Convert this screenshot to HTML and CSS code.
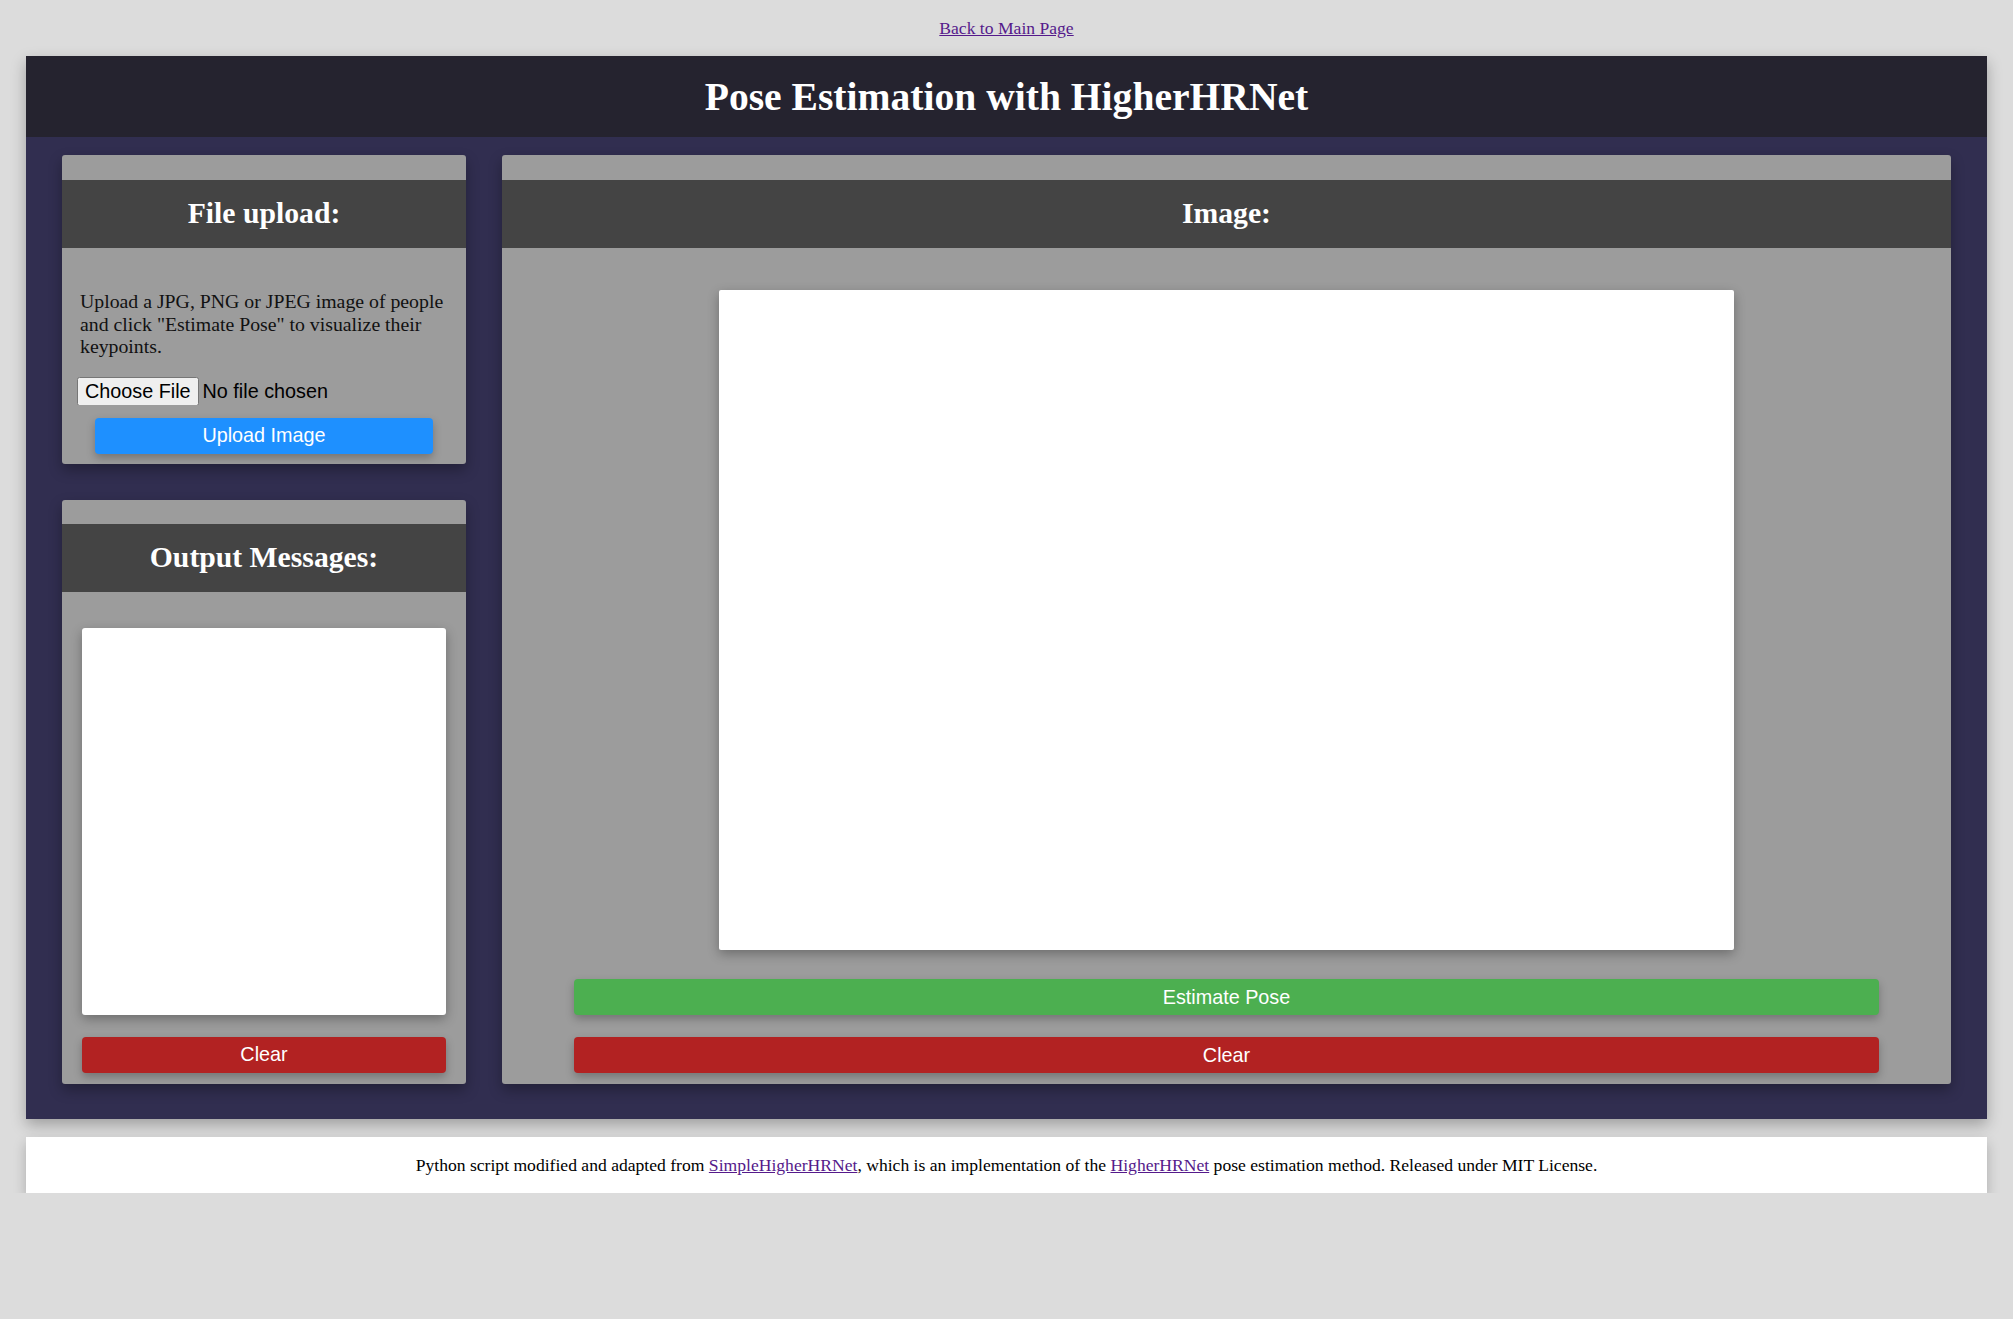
FILE: index.html
```html
<!DOCTYPE html>
<html lang="en">
<head>
<meta charset="utf-8">
<title>Pose Estimation with HigherHRNet</title>
<link rel="stylesheet" href="styles.css">
</head>
<body>
  <p class="back"><a href="#">Back to Main Page</a></p>
  <main class="app">
    <header class="app-header">
      <h1 class="app-title">Pose Estimation with HigherHRNet</h1>
    </header>
    <div class="app-body">
      <div class="left-col">
        <section class="panel">
          <h2 class="panel-title">File upload:</h2>
          <form class="upload-body">
            <p class="upload-text">Upload a JPG, PNG or JPEG image of people and click "Estimate Pose" to visualize their keypoints.</p>
            <input class="file-input" type="file" accept=".jpg,.png,.jpeg">
            <button type="button" class="btn btn-blue btn-upload">Upload Image</button>
          </form>
        </section>
        <section class="panel panel-output">
          <h2 class="panel-title">Output Messages:</h2>
          <div class="output-body">
            <div class="output-box"></div>
            <button type="button" class="btn btn-red btn-full">Clear</button>
          </div>
        </section>
      </div>
      <section class="panel panel-image">
        <h2 class="panel-title">Image:</h2>
        <div class="image-body">
          <div class="image-box"></div>
          <button type="button" class="btn btn-green btn-wide btn-estimate">Estimate Pose</button>
          <button type="button" class="btn btn-red btn-wide btn-clear">Clear</button>
        </div>
      </section>
    </div>
  </main>
  <footer class="footer">
    <p class="footer-text">Python script modified and adapted from <a href="#">SimpleHigherHRNet</a>, which is an implementation of the <a href="#">HigherHRNet</a> pose estimation method. Released under MIT License.</p>
  </footer>
</body>
</html>
```
FILE: styles.css
```css
html, body {
  margin: 0;
  padding: 0;
}
body {
  background: #dcdcdc;
  font-family: "Liberation Serif", "Times New Roman", serif;
  font-size: 18px;
  color: #000;
}
a {
  color: #551a8b;
}
.back {
  margin: 0;
  padding: 18px 0;
  line-height: 20px;
  text-align: center;
  font-size: 17.6px;
}
.app {
  margin: 0 26px;
  background: #312e50;
  box-shadow: 0 6px 14px rgba(0, 0, 0, 0.28);
}
.app-header {
  background: #25232f;
  padding: 18px 0 17px;
}
.app-title {
  margin: 0;
  text-align: center;
  color: #fff;
  font-size: 39.6px;
  line-height: 46px;
  font-weight: 700;
}
.app-body {
  display: grid;
  grid-template-columns: 404px 1fr;
  align-items: start;
  gap: 36px;
  padding: 18px 36px 35px;
}
.left-col {
  display: flex;
  flex-direction: column;
  gap: 36px;
}
.panel {
  background: #9c9c9c;
  border-radius: 3px;
  padding-top: 25px;
  box-shadow: 0 6px 14px rgba(0, 0, 0, 0.3);
}
.panel-output {
  padding-top: 24px;
}
.panel-title {
  margin: 0;
  background: #444;
  color: #fff;
  text-align: center;
  font-size: 29.7px;
  line-height: 34px;
  font-weight: 700;
  padding: 16px 0 18px;
}
.upload-body {
  margin: 0;
  padding: 42px 18px 10px;
}
.upload-text {
  margin: 0 0 19px;
  font-size: 19.8px;
  line-height: 22.6px;
  color: #111;
}
.file-input {
  display: block;
  margin-left: -3px;
  height: 28px;
  font-family: "Liberation Sans", Arial, sans-serif;
  font-size: 19.8px;
  color: #000;
}
.btn {
  display: block;
  height: 36px;
  border: none;
  border-radius: 4px;
  color: #fff;
  font-family: "Liberation Sans", Arial, sans-serif;
  font-size: 19.8px;
  box-shadow: 0 4px 8px rgba(0, 0, 0, 0.25);
  cursor: pointer;
  padding: 0;
}
.btn-blue { background: #1e90ff; }
.btn-red { background: #b22222; }
.btn-green { background: #4caf50; }
.btn-upload {
  width: 338px;
  margin: 13px auto 0;
}
.output-body {
  padding: 36px 20px 11px;
}
.output-box {
  height: 387px;
  background: #fff;
  border-radius: 3px;
  box-shadow: 0 4px 12px rgba(0, 0, 0, 0.3);
  margin-bottom: 22px;
}
.btn-full {
  width: 100%;
}
.image-body {
  padding: 42px 0 11px;
}
.image-box {
  width: 1015px;
  height: 660px;
  margin: 0 auto;
  background: #fff;
  border-radius: 2px;
  box-shadow: 0 4px 12px rgba(0, 0, 0, 0.3);
}
.btn-wide {
  width: 90%;
  margin-left: auto;
  margin-right: auto;
}
.btn-estimate {
  margin-top: 29px;
}
.btn-clear {
  margin-top: 22px;
}
.footer {
  margin: 18px 26px 0;
  background: #fff;
  box-shadow: 0 6px 12px rgba(0, 0, 0, 0.22);
}
.footer-text {
  margin: 0;
  padding: 18px 0;
  line-height: 20px;
  text-align: center;
  font-size: 17.6px;
}
```
